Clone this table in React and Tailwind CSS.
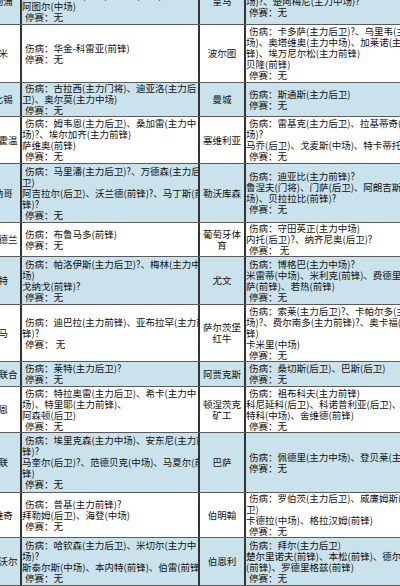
import React from "react";

const rows = [
  {
    h: "h-[47px]",
    ln: "利物浦",
    ll: [
      ["伤病：迪亚斯(主力前锋)、若塔(主力前锋)、", 1],
      ["奥克斯-张伯伦(中场)、凯塔(中场)、", 0],
      ["阿图尔(中场)", 0],
      ["停赛：无", 1],
    ],
    rn: "皇马",
    rl: [
      ["伤病：门迪(主力后卫)、卡马文加(主力中", 1],
      ["场)?、楚阿梅尼(主力中场)?", 0],
      ["停赛：无", 1],
    ],
  },
  {
    h: "h-[58px]",
    ln: "国米",
    ll: [
      ["伤病：华金-科雷亚(前锋)", 1],
      ["停赛：无", 1],
    ],
    rn: "波尔图",
    rl: [
      ["伤病：卡多萨(主力后卫)?、乌里韦(主力中", 1],
      ["场)、奥塔维奥(主力中场)、加莱诺(主力前", 0],
      ["锋)、埃万尼尔松(主力前锋)", 0],
      ["贝隆(前锋)", 0],
      ["停赛：无", 1],
    ],
  },
  {
    h: "h-[34px]",
    ln: "莱比锡",
    ll: [
      ["伤病：古拉西(主力门将)、迪亚洛(主力后", 1],
      ["卫)、奥尔莫(主力中场)", 0],
      ["停赛：无", 1],
    ],
    rn: "曼城",
    rl: [
      ["伤病：斯通斯(主力后卫)", 1],
      ["停赛：无", 1],
    ],
  },
  {
    h: "h-[47px]",
    ln: "埃因霍温",
    ll: [
      ["伤病：姆韦恩(主力后卫)、桑加雷(主力中", 1],
      ["场)?、埃尔加齐(主力前锋)", 0],
      ["萨维奥(前锋)", 0],
      ["停赛：无", 1],
    ],
    rn: "塞维利亚",
    rl: [
      ["伤病：雷基克(主力后卫)、拉基蒂奇(主力中", 1],
      ["场)?", 0],
      ["马乔(后卫)、戈麦斯(中场)、特卡蒂托(前锋)", 0],
      ["停赛：无", 1],
    ],
  },
  {
    h: "h-[59px]",
    ln: "摩纳哥",
    ll: [
      ["伤病：马里潘(主力后卫)?、万德森(主力后", 1],
      ["卫)", 0],
      ["阿吉拉尔(后卫)、沃兰德(前锋)?、马丁斯(前", 0],
      ["锋)?", 0],
      ["停赛：无", 1],
    ],
    rn: "勒沃库森",
    rl: [
      ["伤病：迪亚比(主力前锋)?", 1],
      ["鲁涅夫(门将)、门萨(后卫)、阿朗吉斯(中", 0],
      ["场)、贝拉拉比(前锋)?", 0],
      ["停赛：无", 1],
    ],
  },
  {
    h: "h-[34px]",
    ln: "中日德兰",
    ll: [
      ["伤病：布鲁马多(前锋)", 1],
      ["停赛：无", 1],
    ],
    rn: "葡萄牙体育",
    rl: [
      ["伤病：守田英正(主力中场)", 1],
      ["内托(后卫)?、纳齐尼奥(后卫)?", 0],
      ["停赛： 无", 1],
    ],
  },
  {
    h: "h-[48px]",
    ln: "南特",
    ll: [
      ["伤病：帕洛伊斯(主力后卫)?、梅林(主力中", 1],
      ["场)", 0],
      ["戈纳戈(前锋)?", 0],
      ["停赛：无", 1],
    ],
    rn: "尤文",
    rl: [
      ["伤病：博格巴(主力中场)?", 1],
      ["米雷蒂(中场)、米利克(前锋)、费德里科基耶", 0],
      ["萨(前锋)、若热(前锋)", 0],
      ["停赛：无", 1],
    ],
  },
  {
    h: "h-[57px]",
    ln: "罗马",
    ll: [
      ["伤病：迪巴拉(主力前锋)、亚布拉罕(主力前", 1],
      ["锋)?", 0],
      ["停赛： 无", 1],
    ],
    rn: "萨尔茨堡红牛",
    rl: [
      ["伤病：索莱(主力后卫)?、卡帕尔多(主力中", 1],
      ["场)?、费尔南多(主力前锋)?、奥卡福(前", 0],
      ["锋)", 0],
      ["卡米里(中场)", 0],
      ["停赛：无", 1],
    ],
  },
  {
    h: "h-[25px]",
    ln: "柏林联合",
    ll: [
      ["伤病：莱特(主力后卫)?", 1],
      ["停赛：无", 1],
    ],
    rn: "阿贾克斯",
    rl: [
      ["伤病：桑切斯(后卫)、巴斯(后卫)", 1],
      ["停赛：无", 1],
    ],
  },
  {
    h: "h-[46px]",
    ln: "雷恩",
    ll: [
      ["伤病：特拉奥雷(主力后卫)、希卡(主力中", 1],
      ["场)、特里耶(主力前锋)、", 0],
      ["阿森顿(后卫)", 0],
      ["停赛：无", 1],
    ],
    rn: "顿涅茨克矿工",
    rl: [
      ["伤病：祖布科夫(主力前锋)", 1],
      ["科尼延科(后卫)、科诺普利亚(后卫)、奥恰雷", 0],
      ["特科(中场)、舍维德(前锋)", 0],
      ["停赛：无", 1],
    ],
  },
  {
    h: "h-[60px]",
    ln: "曼联",
    ll: [
      ["伤病：埃里克森(主力中场)、安东尼(主力前", 1],
      ["锋)?", 0],
      ["马奎尔(后卫)?、范德贝克(中场)、马夏尔(前", 0],
      ["锋)", 0],
      ["停赛：无", 1],
    ],
    rn: "巴萨",
    rl: [
      ["伤病：佩德里(主力中场)、登贝莱(主力前锋)", 1],
      ["停赛：无", 1],
    ],
  },
  {
    h: "h-[45px]",
    ln: "诺维奇",
    ll: [
      ["伤病：普基(主力前锋)?", 1],
      ["拜勒姆(后卫)、海登(中场)", 0],
      ["停赛：无", 1],
    ],
    rn: "伯明翰",
    rl: [
      ["伤病：罗伯茨(主力后卫)、威廉姆斯(主力后", 1],
      ["卫)", 0],
      ["卡德拉(中场)、格拉汉姆(前锋)", 0],
      ["停赛：无", 1],
    ],
  },
  {
    h: "h-[48px]",
    ln: "米尔沃尔",
    ll: [
      ["伤病：哈钦森(主力后卫)、米切尔(主力中", 1],
      ["场)?", 0],
      ["斯泰尔斯(中场)、本内特(前锋)、伯雷(前锋)", 0],
      ["停赛：无", 1],
    ],
    rn: "伯恩利",
    rl: [
      ["伤病：拜尔(主力后卫)", 1],
      ["楚尔里诺夫(前锋)、本松(前锋)、德尔维切尔", 0],
      ["(前锋)、罗德里格兹(前锋)", 0],
      ["停赛：无", 1],
    ],
  },
];

function Lines({ lines }) {
  return (
    <>
      {lines.map(([t, ind], i) => (
        <div key={i} className={ind ? "whitespace-pre pl-[3px]" : "whitespace-pre"}>
          {t}
        </div>
      ))}
    </>
  );
}

export default function App() {
  return (
    <div className="w-[400px] h-[586px] overflow-hidden bg-white text-[#111] font-['Noto_Sans_CJK_SC','Noto_Sans',sans-serif] text-[9.5px] leading-[11px]">
      <div className="-ml-[23px] -mt-[22px] w-[460px]">
        {rows.map((r, i) => (
          <div
            key={i}
            className={`flex border-b border-[#5a5a5a] ${r.h} ${
              i % 2 === 0 ? "bg-[#cae2ec]" : "bg-white"
            }`}
          >
            <div className="w-[43px] shrink-0 flex items-center justify-center text-center whitespace-nowrap">
              {r.ln}
            </div>
            <div className="w-[178px] shrink-0 border-l-2 border-[#333] flex flex-col justify-center overflow-hidden">
              <Lines lines={r.ll} />
            </div>
            <div className="w-[46px] shrink-0 border-l-2 border-[#333] flex items-center justify-center text-center">
              {r.rn}
            </div>
            <div className="w-[190px] shrink-0 border-l-2 border-[#333] flex flex-col justify-center">
              <Lines lines={r.rl} />
            </div>
          </div>
        ))}
      </div>
    </div>
  );
}
